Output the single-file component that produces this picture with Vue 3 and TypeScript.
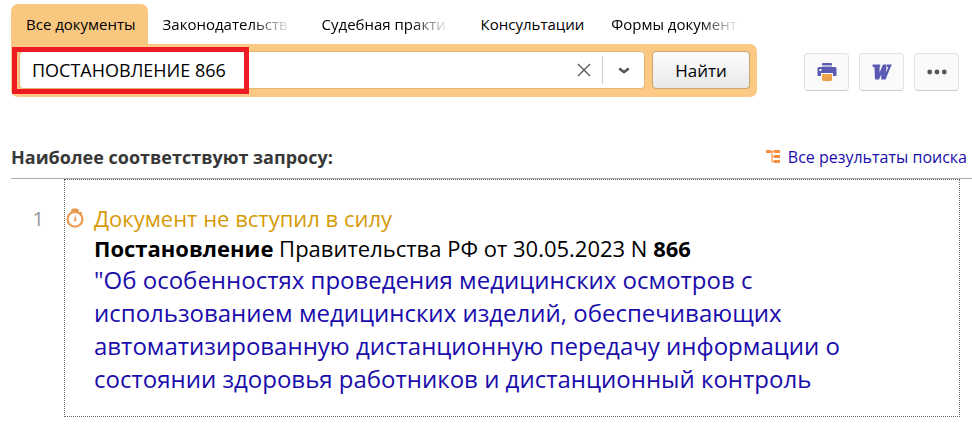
<script setup lang="ts">
import { ref } from 'vue'

interface Tab {
  label: string
  faded?: boolean
}

const tabs: Tab[] = [
  { label: 'Все документы' },
  { label: 'Законодательств', faded: true },
  { label: 'Судебная практи', faded: true },
  { label: 'Консультации' },
  { label: 'Формы документ', faded: true },
]
const activeTab = ref(0)
const query = ref('ПОСТАНОВЛЕНИЕ 866')
</script>

<template>
  <main class="page">
    <header class="top">
      <form class="search" @submit.prevent>
        <nav class="tabs">
          <button
            v-for="(tab, i) in tabs"
            :key="tab.label"
            type="button"
            class="tab"
            :class="{ active: i === activeTab }"
            @click="activeTab = i"
          >
            <span class="tab-label" :class="{ faded: tab.faded }">{{ tab.label }}</span>
          </button>
        </nav>
        <div class="panel">
          <div class="field">
            <input v-model="query" class="query" type="text" aria-label="Поиск" />
            <button type="button" class="plain clear" aria-label="Очистить" @click="query = ''">
              <svg width="14" height="14" viewBox="0 0 14 14">
                <path d="M1 1L13 13M13 1L1 13" fill="none" stroke="#555" stroke-width="1.3" />
              </svg>
            </button>
            <button type="button" class="plain expand" aria-label="Развернуть">
              <svg width="12" height="8" viewBox="0 0 12 8">
                <path d="M1.3 2.4L6 6.2L10.7 2.4" fill="none" stroke="#555" stroke-width="2.6" />
              </svg>
            </button>
          </div>
          <button type="submit" class="find">Найти</button>
          <span class="marker"></span>
        </div>
      </form>
      <div class="tools">
        <button type="button" class="tool" aria-label="Печать">
          <svg width="20" height="20" viewBox="0 0 20 20">
            <defs>
              <linearGradient id="sheet" x1="0" y1="0" x2="1" y2="1">
                <stop offset="0" stop-color="#f2b04a" />
                <stop offset="1" stop-color="#e8974a" />
              </linearGradient>
            </defs>
            <path d="M5 3V2Q5 1 6 1H14Q15 1 15 2V3Z" fill="#5b5bb3" />
            <path d="M5 3H15V5H5Z" fill="#b9b9dd" />
            <path d="M2 5H18Q19.5 5 19.5 6.5V14H16V11H4V14H.5V6.5Q.5 5 2 5Z" fill="#5b5bb3" />
            <rect x="2.5" y="7" width="2" height="2" fill="#fff" />
            <path d="M5 12H15V18L14 19H6L5 18Z" fill="url(#sheet)" />
          </svg>
        </button>
        <button type="button" class="tool" aria-label="Word">
          <svg width="20" height="16" viewBox="0 0 20 16">
            <path
              d="M.6 .5H8.2V3H7.6L7.6 8.4L11 .5H14.4L14.2 8.4L16.2 3H14.8V.5H19.7L19 3H18.6L13.6 15.5H9.2L9.2 10.4L7 15.5H3L2.4 3H.6Z"
              fill="#5b5bb3"
            />
          </svg>
        </button>
        <button type="button" class="tool" aria-label="Ещё">
          <svg width="20" height="6" viewBox="0 0 20 6">
            <circle cx="2.7" cy="3" r="2.4" fill="#555" />
            <circle cx="10" cy="3" r="2.4" fill="#555" />
            <circle cx="17.3" cy="3" r="2.4" fill="#555" />
          </svg>
        </button>
      </div>
    </header>

    <section class="results">
      <div class="results-head">
        <h1 class="heading">Наиболее соответствуют запросу:</h1>
        <a class="all" href="#">
          <svg width="14" height="15" viewBox="0 0 14 15">
            <path d="M0 1H5V4H0ZM8 1H14V4H8ZM8 6H14V9H8ZM8 11H14V14H8Z" fill="#f98f42" />
            <path d="M5 2.5H8M6 2.5V12.5H8M6 7.5H8" fill="none" stroke="#f9a566" stroke-width="1.4" />
          </svg>
          <span>Все результаты поиска</span>
        </a>
      </div>
      <div class="row">
        <span class="number">1</span>
        <article class="result">
          <svg class="timer" width="18" height="20" viewBox="0 0 18 20">
            <path d="M5 3V2L7 .6H11L13 2V3L10.8 4.2H7.2Z" fill="#e99a50" />
            <path d="M13.5 4.6L14.8 3.6L16.4 5.2L15.4 6.4Z" fill="#e99a50" />
            <circle cx="9" cy="11.3" r="7.4" fill="none" stroke="#e99a50" stroke-width="2.2" />
            <path d="M9.4 6.5L10.4 12.2Q10 13.6 9 13.6Q7.8 13.2 8 12.2Z" fill="#e99a50" />
          </svg>
          <div class="text">
            <p class="status">Документ не вступил в силу</p>
            <p class="source"><b>Постановление</b> Правительства РФ от 30.05.2023 N <b>866</b></p>
            <a class="title" href="#">"Об особенностях проведения медицинских осмотров с использованием медицинских изделий, обеспечивающих автоматизированную дистанционную передачу информации о состоянии здоровья работников и дистанционный контроль</a>
          </div>
        </article>
      </div>
    </section>
  </main>
</template>

<style>
body {
  background: #fff;
}
</style>

<style scoped>
.page {
  padding: 4px 0 8px 11px;
  font-family: "Segoe UI", "Open Sans", "Noto Sans", sans-serif;
  color: #000;
}
.page *,
.page {
  box-sizing: border-box;
}
button,
input {
  font-family: inherit;
  color: inherit;
}
.top {
  display: flex;
  align-items: flex-end;
  justify-content: space-between;
  gap: 47px;
  padding-right: 13px;
}
.search {
  flex: 1;
  min-width: 0;
}
.tabs {
  display: flex;
  height: 40px;
}
.tab {
  flex: none;
  padding: 0 12px 0 15px;
  border: 0;
  border-radius: 7px 7px 0 0;
  background: none;
  font-size: 15px;
  line-height: 24px;
  text-align: left;
  white-space: nowrap;
}
.tab.active {
  background: #f9c880;
}
.tab-label {
  display: block;
}
.faded {
  width: 132px;
  mask-image: linear-gradient(to right, #000 88px, transparent 128px);
}
.panel {
  position: relative;
  display: flex;
  gap: 7px;
  padding: 7px 7px 8px 8px;
  border-radius: 0 7px 7px 7px;
  background: #fbc983;
}
.field {
  flex: 1;
  min-width: 0;
  display: flex;
  align-items: center;
  height: 38px;
  border: 1px solid #e3b574;
  border-radius: 4px;
  background: #fff;
}
.query {
  flex: 1;
  min-width: 0;
  height: 36px;
  padding: 0 12px;
  border: 0;
  outline: 0;
  background: none;
  font-size: 18px;
}
.plain {
  display: flex;
  align-items: center;
  justify-content: center;
  height: 28px;
  padding: 0;
  border: 0;
  background: none;
}
.clear {
  width: 36px;
}
.expand {
  width: 42px;
  border-left: 1px solid #ccc;
}
.find {
  width: 98px;
  height: 38px;
  padding: 0;
  border: 1px solid #c9a56f;
  border-radius: 4px;
  background: linear-gradient(#fcfcfc, #e9e9e9);
  font-size: 17px;
}
.marker {
  position: absolute;
  left: 1px;
  top: 3px;
  width: 237px;
  height: 47px;
  border: 5px solid #ed1c24;
  pointer-events: none;
}
.tools {
  display: flex;
  gap: 10px;
  padding-bottom: 6px;
}
.tool {
  display: flex;
  align-items: center;
  justify-content: center;
  width: 45px;
  height: 38px;
  padding: 0;
  border: 1px solid #e2e2e2;
  border-bottom-color: #ccc;
  border-radius: 4px;
  background: #fafafa;
}
.results-head {
  display: flex;
  align-items: center;
  justify-content: space-between;
  height: 44px;
  margin-top: 38px;
  padding-right: 5px;
  border-bottom: 1px solid #aaa;
}
.heading {
  margin: 0;
  font-size: 18px;
  line-height: 24px;
  font-weight: 700;
  color: #383838;
}
.all {
  display: flex;
  align-items: center;
  gap: 8px;
  font-size: 16px;
  line-height: 24px;
  color: #1a0dab;
  text-decoration: none;
}
.row {
  display: flex;
  padding-right: 12px;
}
.number {
  width: 53px;
  padding: 25px 20px 0 0;
  font-size: 20px;
  line-height: 30px;
  text-align: right;
  color: #999;
}
.result {
  flex: 1;
  display: flex;
  gap: 10px;
  padding: 23px 64px 21px 1px;
  border: 1px dotted #666;
}
.timer {
  flex: none;
  margin-top: 5px;
}
.text {
  flex: 1;
}
.text p {
  margin: 0;
  font-size: 22px;
  line-height: 30px;
}
.status {
  color: #d59a08;
}
.title {
  display: block;
  font-size: 24px;
  line-height: 33px;
  color: #1a0dab;
  text-decoration: none;
}
</style>
